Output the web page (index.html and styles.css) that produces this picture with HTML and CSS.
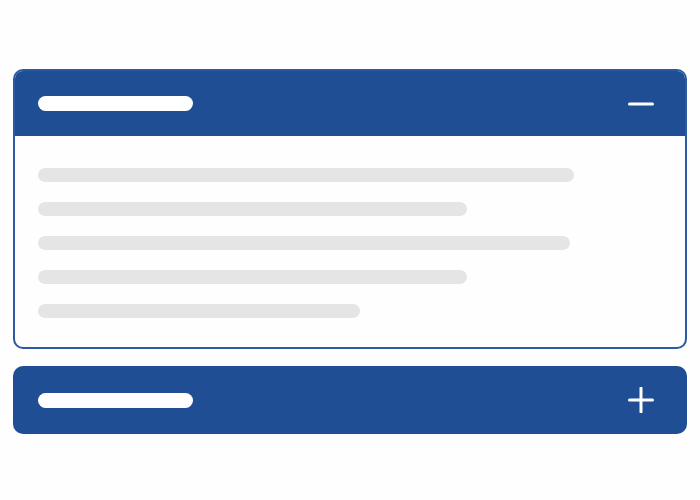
FILE: index.html
```html
<!DOCTYPE html>
<html lang="en">
<head>
<meta charset="utf-8">
<title>Accordion</title>
<link rel="stylesheet" href="styles.css">
</head>
<body>
  <div class="accordion">
    <section class="panel panel-open">
      <header class="panel-head">
        <span class="title-bar"></span>
        <svg class="toggle" width="26" height="26" viewBox="0 0 26 26" aria-hidden="true">
          <line x1="1.5" y1="13" x2="24.5" y2="13" />
        </svg>
      </header>
      <div class="panel-body">
        <span class="line" style="width:536px"></span>
        <span class="line" style="width:429px"></span>
        <span class="line" style="width:532px"></span>
        <span class="line" style="width:429px"></span>
        <span class="line" style="width:322px"></span>
      </div>
    </section>
    <section class="panel panel-closed">
      <header class="panel-head">
        <span class="title-bar"></span>
        <svg class="toggle" width="26" height="26" viewBox="0 0 26 26" aria-hidden="true">
          <line x1="1.5" y1="13" x2="24.5" y2="13" />
          <line x1="13" y1="1" x2="13" y2="25" />
        </svg>
      </header>
    </section>
  </div>
</body>
</html>
```

FILE: styles.css
```css
html, body {
  margin: 0;
  padding: 0;
  background: #fefefe;
  font-family: "Liberation Sans", Arial, sans-serif;
}

.accordion {
  display: flex;
  flex-direction: column;
  gap: 17px;
  padding: 69px 13px 0;
}

.panel {
  border-radius: 10px;
  overflow: hidden;
  box-sizing: border-box;
}

.panel-open {
  border: 2px solid #2a5a9f;
  background: #fefefe;
}

.panel-head {
  display: flex;
  align-items: center;
  justify-content: space-between;
  background: #1f4e95;
  box-sizing: border-box;
}

.panel-open .panel-head {
  height: 65px;
  padding: 0 31px 0 23px;
}

.panel-closed .panel-head {
  height: 68px;
  padding: 0 33px 0 25px;
}

.title-bar {
  display: block;
  width: 155px;
  height: 15px;
  border-radius: 8px;
  background: #ffffff;
}

.toggle {
  display: block;
}

.toggle line {
  stroke: #ffffff;
  stroke-width: 3;
  stroke-linecap: round;
}

.panel-body {
  display: flex;
  flex-direction: column;
  align-items: flex-start;
  gap: 20px;
  padding: 32px 23px 29px;
}

.line {
  display: block;
  height: 14px;
  border-radius: 7px;
  background: #e5e5e5;
}
```
